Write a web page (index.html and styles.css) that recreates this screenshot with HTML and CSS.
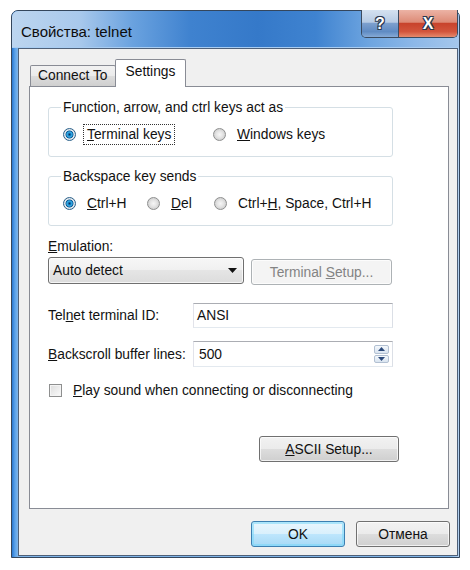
FILE: index.html
```html
<!DOCTYPE html>
<html lang="en">
<head>
    <meta charset="UTF-8">
    <title>Свойства: telnet</title>
    <link rel="stylesheet" href="styles.css">
</head>
<body>
    <div class="window">
        <div class="titlebar">
            <span class="title">Свойства: telnet</span>
            <div class="caption-btns">
                <span class="cap-btn help">?</span>
                <span class="cap-btn close">X</span>
            </div>
        </div>

        <div class="client">
            <div class="tabs">
                <div class="tab">Connect To</div>
                <div class="tab active">Settings</div>
            </div>

            <div class="panel">
                <div class="group">
                    <div class="group-title">Function, arrow, and ctrl keys act as</div>
                    <div class="options keys">
                        <label class="opt"><span class="radio checked"></span><span class="focus"><u>T</u>erminal keys</span></label>
                        <label class="opt"><span class="radio"></span><span><u>W</u>indows keys</span></label>
                    </div>
                </div>

                <div class="group">
                    <div class="group-title">Backspace key sends</div>
                    <div class="options backspace">
                        <label class="opt"><span class="radio checked"></span><span><u>C</u>trl+H</span></label>
                        <label class="opt"><span class="radio"></span><span><u>D</u>el</span></label>
                        <label class="opt"><span class="radio"></span><span>Ctrl+<u>H</u>, Space, Ctrl+H</span></label>
                    </div>
                </div>

                <div class="field-label"><u>E</u>mulation:</div>
                <div class="combo-row">
                    <div class="combo">
                        <span>Auto detect</span>
                        <svg width="9" height="5" viewBox="0 0 9 5"><path d="M0 0h9L4.5 5z" fill="#111"/></svg>
                    </div>
                    <button class="btn disabled setup">Terminal <u>S</u>etup...</button>
                </div>

                <div class="text-row">
                    <span class="label">Tel<u>n</u>et terminal ID:</span>
                    <div class="field"><span>ANSI</span></div>
                </div>
                <div class="text-row">
                    <span class="label"><u>B</u>ackscroll buffer lines:</span>
                    <div class="field tall">
                        <span class="num">500</span>
                        <div class="spin">
                            <span class="spin-btn"><svg width="7" height="4" viewBox="0 0 7 4"><path d="M3.5 0L7 4H0z" fill="#2c4a7b"/></svg></span>
                            <span class="spin-btn"><svg width="7" height="4" viewBox="0 0 7 4"><path d="M0 0h7L3.5 4z" fill="#2c4a7b"/></svg></span>
                        </div>
                    </div>
                </div>

                <label class="check-row"><span class="checkbox"></span><span><u>P</u>lay sound when connecting or disconnecting</span></label>

                <div class="ascii-row">
                    <button class="btn ascii"><u>A</u>SCII Setup...</button>
                </div>
            </div>

            <div class="dialog-btns">
                <button class="btn default">OK</button>
                <button class="btn">Отмена</button>
            </div>
        </div>
    </div>
</body>
</html>
```

FILE: styles.css
```css
* {
    box-sizing: border-box;
}
body {
    margin: 0;
    background: #fff;
    font-family: "Liberation Sans", Arial, sans-serif;
    font-size: 13.8px;
    color: #111;
}
u {
    text-underline-offset: 1px;
}
.window {
    width: 449px;
    height: 548px;
    margin: 10px 0 0 11px;
    border: 1px solid #34465c;
    border-radius: 7px 7px 0 0;
    display: flex;
    flex-direction: column;
    background-color: #5a96d8;
    background-image: linear-gradient(90deg, #2a78d0, #5aa2ea 3px, #7fb4e8 6px, #7fb4e8 98%, #b6d3f2);
}
.titlebar {
    height: 37px;
    display: flex;
    justify-content: space-between;
    align-items: flex-start;
    border-radius: 6px 6px 0 0;
    border-bottom: 1px solid #a9cdf2;
    background-color: #4a8ad4;
    background-image: linear-gradient(90deg, #bcd5ef 0, #a9c9ec 15%, #6aa2df 27%, #3f82cf 40%, #3579c9 55%, #3f83d0 68%, #6ea5e0 80%, #8db8e8 90%, #a5c7ec 100%);
}
.title {
    padding: 12px 0 0 9px;
    font-size: 15px;
    line-height: 18px;
    color: #0c0c0c;
}
.caption-btns {
    display: flex;
    height: 28px;
    margin: -1px 1px 0 0;
    border: 1px solid #3b4b60;
    border-top: none;
    border-radius: 0 0 5px 5px;
    overflow: hidden;
}
.cap-btn {
    display: flex;
    align-items: center;
    justify-content: center;
    font-weight: bold;
    font-size: 16px;
    color: #fff;
    text-shadow: 0 0 1px #1f2d45, 1px 1px 0 #2b3850, -1px -1px 0 #2b3850, 1px -1px 0 #2b3850, -1px 1px 0 #2b3850;
}
.help {
    width: 36px;
    background: linear-gradient(#d4e1f0, #b7cbe4 45%, #7c9fcd 50%, #5f8bc3 80%, #86aad6);
}
.close {
    width: 59px;
    border-left: 1px solid #3b4b60;
    background: linear-gradient(#ecb3a5, #dd8b77 45%, #c8432c 50%, #d2553c 80%, #e68a6c);
}
.client {
    flex: 1;
    margin: 0 1px 1px 6px;
    border: 1px solid #4f6179;
    background: #f0f0f0;
    padding: 10px 8px 0 10px;
}
.tabs {
    display: flex;
    align-items: flex-end;
    height: 27px;
    margin-left: 1px;
}
.tab {
    height: 21px;
    padding: 0 7px;
    border: 1px solid #898c95;
    border-bottom: none;
    border-radius: 2px 2px 0 0;
    background: linear-gradient(#f2f2f2, #ebebeb 50%, #dddddd 50%, #cfcfcf);
    line-height: 20px;
}
.tab.active {
    height: 28px;
    margin: 0 0 -1px -1px;
    padding: 0 10px;
    background: #fff;
    line-height: 24px;
    position: relative;
    z-index: 1;
}
.panel {
    height: 423px;
    border: 1px solid #898c95;
    background: #fff;
    padding: 0 0 0 18px;
}
.group {
    width: 345px;
    margin-top: 20px;
    padding: 0 0 12px 14px;
    border: 1px solid #d5dfe5;
    border-radius: 3px;
}
.group + .group {
    margin-top: 19px;
}
.group-title {
    width: fit-content;
    margin: -9px 0 0 -2px;
    padding: 0 2px;
    background: #fff;
    line-height: 17px;
}
.options {
    display: flex;
    align-items: center;
    height: 20px;
    margin-top: 8px;
}
.opt {
    display: flex;
    align-items: center;
    gap: 11px;
}
.keys .opt:first-child {
    width: 150px;
}
.backspace .opt:nth-child(1) {
    width: 84px;
}
.backspace .opt:nth-child(2) {
    width: 67px;
}
.radio {
    width: 13px;
    height: 13px;
    border-radius: 50%;
    border: 1px solid #8e8f8f;
    background: radial-gradient(circle at 50% 50%, #f6f6f6 0, #e6e6e6 3px, #cfcfcf 6px);
}
.radio.checked {
    border-color: #2c628b;
    background: radial-gradient(circle at 50% 50%, #0b2d52 0, #1b7fc3 1.5px, #38b7f0 2.5px, #0e5a94 3.6px, #e9eef3 4.4px, #d4d9de 6px);
}
.focus {
    margin-left: -4px;
    padding: 1px 3px;
    border: 1px dotted #333;
    line-height: 17px;
}
.field-label {
    margin-top: 12px;
    line-height: 17px;
}
.combo-row {
    display: flex;
    align-items: flex-start;
    gap: 7px;
    margin-top: 2px;
}
.combo {
    width: 196px;
    height: 27px;
    display: flex;
    align-items: center;
    justify-content: space-between;
    padding: 0 6px 0 4px;
    border: 1px solid #707070;
    border-radius: 3px;
    background: linear-gradient(#f7f7f7, #f0f0f0 50%, #e5e5e5 50%, #dcdcdc);
    box-shadow: inset 0 0 0 1px rgba(255, 255, 255, 0.7);
}
.btn {
    height: 26px;
    padding: 0;
    border: 1px solid #707070;
    border-radius: 3px;
    background: linear-gradient(#f2f2f2, #ebebeb 50%, #dddddd 50%, #cfcfcf);
    box-shadow: inset 0 0 0 1px rgba(255, 255, 255, 0.7);
    font: inherit;
    color: #111;
}
.btn.disabled {
    border-color: #adb2b5;
    background: #f4f4f4;
    color: #838383;
}
.setup {
    width: 141px;
    margin-top: 2px;
}
.text-row {
    display: flex;
    align-items: center;
    margin-top: 18px;
}
.text-row + .text-row {
    margin-top: 13px;
}
.label {
    width: 145px;
}
.field {
    width: 200px;
    height: 25px;
    display: flex;
    align-items: center;
    justify-content: space-between;
    padding: 0 3px 0 3px;
    border: 1px solid;
    border-color: #abadb3 #dbdfe6 #e3e9ef #e2e3ea;
    background: #fff;
}
.field.tall {
    height: 26px;
}
.num {
    padding-left: 2px;
}
.spin {
    width: 15px;
    height: 18px;
    display: flex;
    flex-direction: column;
    gap: 1px;
}
.spin-btn {
    flex: 1;
    display: flex;
    align-items: center;
    justify-content: center;
    border: 1px solid #b2c0d2;
    border-radius: 2px;
    background: linear-gradient(#f4f8fc, #d9e4f0);
}
.check-row {
    display: flex;
    align-items: center;
    gap: 11px;
    height: 18px;
    margin: 14px 0 0 1px;
}
.checkbox {
    width: 13px;
    height: 13px;
    border: 1px solid #8e8f8f;
    background: linear-gradient(135deg, #dcdcdc, #fbfbfb);
    box-shadow: inset 0 0 0 1px #f4f4f4;
}
.ascii-row {
    display: flex;
    justify-content: flex-end;
    margin-top: 37px;
    padding-right: 49px;
}
.ascii {
    width: 140px;
}
.dialog-btns {
    display: flex;
    justify-content: flex-end;
    gap: 11px;
    margin: 12px -1px 0 0;
}
.dialog-btns .btn {
    width: 94px;
}
.btn.default {
    border-color: #3c7fb1;
    background: linear-gradient(#eaf6fd, #d9f0fc 50%, #bee6fd 50%, #a7d9f5);
    box-shadow: inset 0 0 0 2px rgba(120, 215, 250, 0.55);
}
```
